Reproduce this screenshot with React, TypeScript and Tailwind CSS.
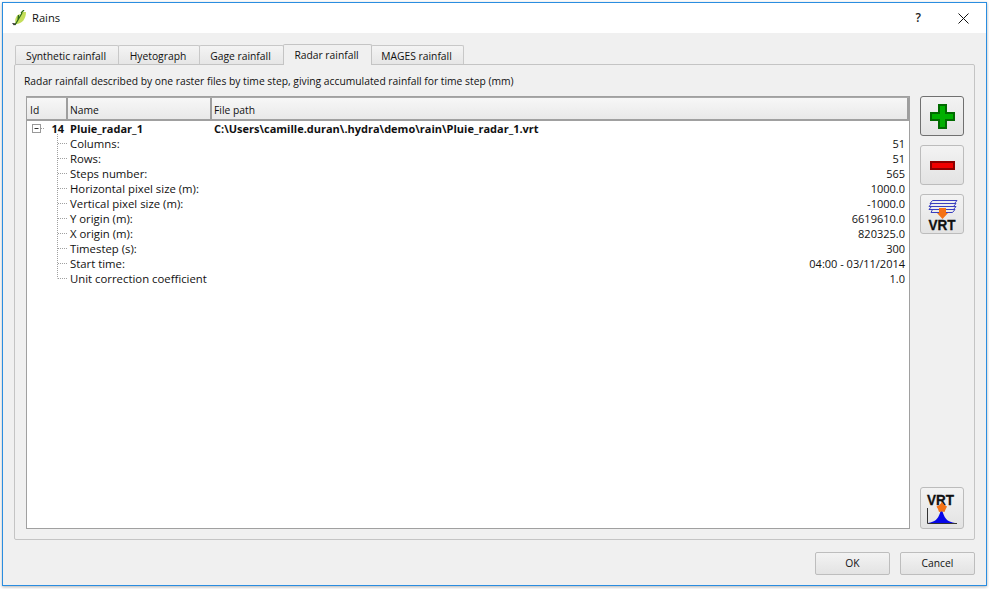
const font = "[font-family:'Open_Sans','Noto_Sans',sans-serif]";

const rows: [string, string][] = [
  ["Columns:", "51"],
  ["Rows:", "51"],
  ["Steps number:", "565"],
  ["Horizontal pixel size (m):", "1000.0"],
  ["Vertical pixel size (m):", "-1000.0"],
  ["Y origin (m):", "6619610.0"],
  ["X origin (m):", "820325.0"],
  ["Timestep (s):", "300"],
  ["Start time:", "04:00 - 03/11/2014"],
  ["Unit correction coefficient", "1.0"],
];

function Tab({ label, w, active }: { label: string; w: string; active?: boolean }) {
  return active ? (
    <div className={`${w} h-[21px] -mb-px -mr-px z-10 bg-[#f0f0f0] border border-b-0 border-[#c4c4c4] rounded-t-[2px] flex items-start justify-center pt-[3px] pr-[2px] text-[10.3px] leading-[15px] text-[#111]`}>
      {label}
    </div>
  ) : (
    <div className={`${w} h-[19px] -mr-px pt-[2px] pr-[2px] bg-gradient-to-b from-[#f4f4f4] to-[#e6e6e6] border border-b-0 border-[#c8c8c8] rounded-t-[2px] flex items-center justify-center text-[10.3px] leading-[15px] text-[#111]`}>
      {label}
    </div>
  );
}

function HeadCell({ label, w, pl }: { label: string; w: string; pl: string }) {
  return (
    <div className={`${w} h-full ${pl} pt-[5px] flex items-center text-[10.3px] bg-gradient-to-b from-[#f7f7f7] to-[#e9e9e9] border-r-2 border-[#9e9e9e] text-[#111]`}>
      {label}
    </div>
  );
}

function ToolButton({ h, strong, children }: { h: string; strong?: boolean; children: React.ReactNode }) {
  return (
    <div className={`w-[44px] ${h} shrink-0 rounded-[3px] border ${strong ? "border-[#707070]" : "border-[#bcbcbc]"} bg-gradient-to-b from-[#f3f3f3] to-[#e3e3e3] flex items-center justify-center`}>
      {children}
    </div>
  );
}

function DialogButton({ label }: { label: string }) {
  return (
    <div className="w-[75px] h-[23px] rounded-[2px] border border-[#bdbdbd] bg-gradient-to-b from-[#f3f3f3] to-[#e3e3e3] flex items-center justify-center text-[10.3px] text-[#111]">
      {label}
    </div>
  );
}

function Stack() {
  return (
    <svg width="32" height="34" viewBox="0 0 32 34" className="overflow-visible">
      <g fill="none" stroke="#3a3fc0" strokeWidth="1">
        <path d="M6.5 3.5H31L28.5 6.5H4Z" />
        <path d="M5.5 6.5H30L27.5 9.5H3Z" />
        <path d="M5.5 9.5H30L27.5 12.5H3Z" />
        <path d="M6.5 12.5H29L26.5 15.5H5Z" />
      </g>
      <path d="M13 11H20V16H22L16.5 22L11 16H13Z" fill="#f47216" />
      <text x="16" y="33" textAnchor="middle" textLength="27" lengthAdjust="spacingAndGlyphs" fontFamily="'Liberation Sans',sans-serif" fontWeight="700" fontSize="15" fill="#111" stroke="#111" strokeWidth="0.3">VRT</text>
    </svg>
  );
}

function Peak() {
  return (
    <svg width="34" height="36" viewBox="0 0 34 36" className="overflow-visible">
      <text x="15.5" y="15" textAnchor="middle" textLength="27" lengthAdjust="spacingAndGlyphs" fontFamily="'Liberation Sans',sans-serif" fontWeight="700" fontSize="15" fill="#111" stroke="#111" strokeWidth="0.3">VRT</text>
      <path d="M2.5 18V33.5H32" fill="none" stroke="#333" strokeWidth="1" />
      <path d="M3 33C10 32 13 29 15 23C15.5 20 17.5 20 18 23C20 29 23 32 30 33Z" fill="#0707e8" />
      <path d="M17 12L19.5 15L22 16.5L20.5 19.5L19.5 22L17 21.5L14 22L13 19L11.5 16.5L14.5 15Z" fill="#f47216" />
    </svg>
  );
}

export default function App() {
  return (
    <div className={`w-[989px] h-[589px] bg-white p-[2px] ${font}`}>
      <div className="w-[985px] h-[584px] border border-[#2a8de0] bg-[#f0f0f0] flex flex-col shadow-[0_1px_3px_rgba(0,0,0,0.3)]">
        <div className="h-[30px] shrink-0 bg-white flex items-center pl-[9px] pr-[9px]">
          <svg width="15" height="16" viewBox="0 0 15 16" className="mr-[5px]">
            <path d="M4 14C2 10 4 5 8 4L7 8L10 2L14 2C14 9 10 14 4 14Z" fill="#c4de5a" />
            <path d="M3 15L10 3M9 3L12 0M6 10L6.5 5" stroke="#2f6b1a" strokeWidth="1.3" fill="none" />
            <path d="M0 13L4 13.5L2 15.5Z" fill="#222" />
          </svg>
          <span className="text-[11.2px] text-[#111]">Rains</span>
          <span className="ml-auto mr-[37px] text-[12px] font-semibold text-[#222]">?</span>
          <svg width="11" height="11" viewBox="0 0 11 11" className="mr-[8px]">
            <path d="M0.5 0.5L10.5 10.5M10.5 0.5L0.5 10.5" stroke="#111" strokeWidth="1" />
          </svg>
        </div>

        <div className="flex-1 flex flex-col px-[11px] pt-[10px]">
          <div className="flex items-end pl-[1px] h-[21px]">
            <Tab label="Synthetic rainfall" w="w-[104px]" />
            <Tab label="Hyetograph" w="w-[82px]" />
            <Tab label="Gage rainfall" w="w-[85px]" />
            <Tab label="Radar rainfall" w="w-[89px]" active />
            <Tab label="MAGES rainfall" w="w-[93px]" />
          </div>
          <div className="w-[961px] h-[476px] border border-[#c4c4c4] bg-[#f0f0f0] rounded-[2px] flex flex-col">
            <div className="h-[31px] shrink-0 pl-[9px] pt-[9px] text-[10.3px] leading-[15px] text-[#111]">
              Radar rainfall described by one raster files by time step, giving accumulated rainfall for time step (mm)
            </div>
            <div className="flex pl-[11px] pr-[9px] gap-[10px]">
              <div className="w-[884px] h-[433px] border border-[#a0a0a0] bg-white flex flex-col">
                <div className="h-[24px] shrink-0 flex border-t border-[#a8a8a8] border-b-2 border-b-[#a0a0a0]">
                  <HeadCell label="Id" w="w-[41px]" pl="pl-[3px]" />
                  <HeadCell label="Name" w="w-[144px]" pl="pl-[2px]" />
                  <HeadCell label="File path" w="flex-1" pl="pl-[2px]" />
                </div>
                <div className="relative text-[11px] leading-[15px] text-[#111]">
                  <div className="h-[15px] flex font-bold">
                    <div className="w-[37px] text-right">14</div>
                    <div className="w-[144px] pl-[6px]">Pluie_radar_1</div>
                    <div className="pl-[6px]">C:\Users\camille.duran\.hydra\demo\rain\Pluie_radar_1.vrt</div>
                  </div>
                  <svg width="40" height="165" viewBox="0 0 40 165" className="absolute left-[4px] top-0">
                    <rect x="1.5" y="3.5" width="8" height="8" fill="#fff" stroke="#999" />
                    <path d="M3.5 7.5H7.5" stroke="#333" />
                    <path d="M10 7.5H14" stroke="#a0a0a0" strokeDasharray="1 1" />
                    <path d="M26.5 13V157.5" stroke="#a0a0a0" strokeDasharray="1 1" />
                    <path d="M27 22.5H36M27 37.5H36M27 52.5H36M27 67.5H36M27 82.5H36M27 97.5H36M27 112.5H36M27 127.5H36M27 142.5H36M27 157.5H36" stroke="#a0a0a0" strokeDasharray="1 1" />
                  </svg>
                  {rows.map(([k, v]) => (
                    <div key={k} className="h-[15px] flex justify-between pl-[43px] pr-[4px]">
                      <span className="text-[11.35px]">{k}</span>
                      <span>{v}</span>
                    </div>
                  ))}
                </div>
              </div>
              <div className="w-[44px] h-[433px] flex flex-col gap-[9px]">
                <ToolButton h="h-[40px]" strong>
                  <svg width="25" height="25" viewBox="0 0 25 25">
                    <path d="M9 1H16V9H24V16H16V24H9V16H1V9H9Z" fill="#00b000" stroke="#006b00" strokeWidth="2" />
                  </svg>
                </ToolButton>
                <ToolButton h="h-[40px]">
                  <svg width="25" height="9" viewBox="0 0 25 9">
                    <rect x="1" y="1" width="23" height="7" fill="#f00000" stroke="#8b0000" strokeWidth="2" />
                  </svg>
                </ToolButton>
                <ToolButton h="h-[40px]">
                  <Stack />
                </ToolButton>
                <div className="flex-1" />
                <ToolButton h="h-[42px]">
                  <Peak />
                </ToolButton>
              </div>
            </div>
          </div>
          <div className="flex justify-end gap-[10px] pt-[12px]">
            <DialogButton label="OK" />
            <DialogButton label="Cancel" />
          </div>
        </div>
      </div>
    </div>
  );
}
